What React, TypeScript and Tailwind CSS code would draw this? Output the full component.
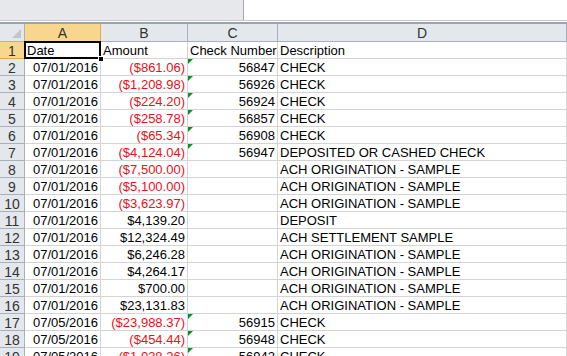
const ROWS: [string, string, string, string][] = [
  ["07/01/2016", "($861.06)", "56847", "CHECK"],
  ["07/01/2016", "($1,208.98)", "56926", "CHECK"],
  ["07/01/2016", "($224.20)", "56924", "CHECK"],
  ["07/01/2016", "($258.78)", "56857", "CHECK"],
  ["07/01/2016", "($65.34)", "56908", "CHECK"],
  ["07/01/2016", "($4,124.04)", "56947", "DEPOSITED OR CASHED CHECK"],
  ["07/01/2016", "($7,500.00)", "", "ACH ORIGINATION - SAMPLE"],
  ["07/01/2016", "($5,100.00)", "", "ACH ORIGINATION - SAMPLE"],
  ["07/01/2016", "($3,623.97)", "", "ACH ORIGINATION - SAMPLE"],
  ["07/01/2016", "$4,139.20", "", "DEPOSIT"],
  ["07/01/2016", "$12,324.49", "", "ACH SETTLEMENT SAMPLE"],
  ["07/01/2016", "$6,246.28", "", "ACH ORIGINATION - SAMPLE"],
  ["07/01/2016", "$4,264.17", "", "ACH ORIGINATION - SAMPLE"],
  ["07/01/2016", "$700.00", "", "ACH ORIGINATION - SAMPLE"],
  ["07/01/2016", "$23,131.83", "", "ACH ORIGINATION - SAMPLE"],
  ["07/05/2016", "($23,988.37)", "56915", "CHECK"],
  ["07/05/2016", "($454.44)", "56948", "CHECK"],
  ["07/05/2016", "($1,038.26)", "56942", "CHECK"],
]

const cols = "grid grid-cols-[25px_76px_87px_90px_1fr]"
const cell = "h-[17px] border-r border-b border-[#d4d4d4] px-[2px] leading-[18px] whitespace-nowrap overflow-hidden"
const rowHead = "h-[17px] border-r border-b border-[#a9b0b9] bg-[#e4e7ec] text-center text-[14px] leading-[18px] text-[#333]"

export default function App() {
  return (
    <div className="w-[567px] h-[356px] overflow-hidden bg-white text-[13px] text-black" style={{ fontFamily: '"Liberation Sans", Arial, sans-serif' }}>
      {/* formula bar strip */}
      <div className="flex h-[20px] bg-[#e6e8eb]">
        <div className="w-[243px]" />
        <div className="flex-1 bg-white border-l border-[#a5a9ae]" />
      </div>
      <div className="h-[1px] bg-[#c5c8cc]" />
      <div className="h-[1px] bg-white" />
      <div className="h-[2px] bg-[#9ea3a9]" />

      {/* column headers */}
      <div className={cols}>
        <div className="relative h-[18px] border-r border-b border-[#a9b0b9] bg-[#e4e7ec]">
          <div className="absolute right-[3px] bottom-[3px] w-0 h-0 border-l-[9px] border-l-transparent border-b-[9px] border-b-[#c2c6cc]" />
        </div>
        <div className="h-[18px] border-r border-b border-[#e2a947] bg-[#f9d68e] text-center text-[14px] leading-[18px] text-[#333]">A</div>
        {["B", "C", "D"].map((c) => (
          <div key={c} className="h-[18px] border-r border-b border-[#a9b0b9] bg-[#e4e7ec] text-center text-[14px] leading-[18px] text-[#333]">
            {c}
          </div>
        ))}
      </div>

      {/* row 1 */}
      <div className={cols}>
        <div className="h-[17px] border-r border-b border-[#e2a947] bg-[#f9d68e] text-center text-[14px] leading-[18px] text-[#333]">1</div>
        <div className="relative h-[17px] border-b border-r border-[#d4d4d4]">
          <div className="absolute -left-[1px] -top-[1px] -right-[1px] -bottom-[1px] border-2 border-black px-[1px] leading-[16px] bg-white">Date</div>
          <div className="absolute -right-[4px] -bottom-[4px] w-[6px] h-[6px] bg-black border border-white z-10" />
        </div>
        <div className={cell}>Amount</div>
        <div className={cell}>Check Number</div>
        <div className={cell}>Description</div>
      </div>

      {ROWS.map((r, i) => {
        const neg = r[1].startsWith("(")
        return (
          <div key={i} className={cols}>
            <div className={rowHead}>{i + 2}</div>
            <div className={cell + " text-right"}>{r[0]}</div>
            <div className={cell + " text-right " + (neg ? "text-[#e8101a]" : "")}>{r[1]}</div>
            <div className={cell + " relative text-right"}>
              {r[2] && (
                <div className="absolute left-0 top-0 w-0 h-0 border-t-[5px] border-t-[#0d8f1d] border-r-[5px] border-r-transparent" />
              )}
              {r[2]}
            </div>
            <div className={cell}>{r[3]}</div>
          </div>
        )
      })}
    </div>
  )
}
